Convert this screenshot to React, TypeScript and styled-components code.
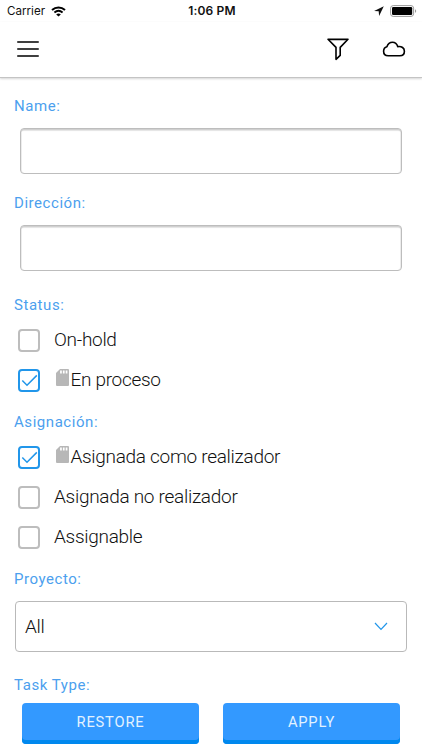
import React, { useState } from "react";
import styled, { createGlobalStyle } from "styled-components";

const GlobalStyle = createGlobalStyle`
  * { box-sizing: border-box; }
  html, body { margin: 0; padding: 0; background: #fff; }
  body { font-family: Roboto, "Liberation Sans", sans-serif; overflow: hidden; }
`;

const Screen = styled.div`
  width: 422px;
  height: 750px;
  display: flex;
  flex-direction: column;
  background: #fff;
  overflow: hidden;
`;

const StatusBar = styled.div`
  height: 22px;
  display: grid;
  grid-template-columns: 1fr auto 1fr;
  align-items: center;
  padding: 0 5px 0 7px;
  font-family: Inter, "Liberation Sans", sans-serif;
  font-size: 11.6px;
  line-height: 22px;
  color: #111;
`;

const Carrier = styled.div`
  display: flex;
  align-items: center;
  gap: 6px;
`;

const Clock = styled.div`
  font-weight: 600;
  font-size: 12px;
  letter-spacing: 0.15px;
`;

const Indicators = styled.div`
  display: flex;
  align-items: center;
  justify-content: flex-end;
  gap: 6px;
`;

const Header = styled.header`
  height: 56px;
  display: flex;
  align-items: center;
  padding: 0 16px 2px 17px;
  border-bottom: 1px solid #c4c4c4;
  box-shadow: 0 1px 2px rgba(0, 0, 0, 0.16);
`;

const IconButton = styled.button<{ $end?: boolean; $gap?: number }>`
  display: flex;
  padding: 0;
  border: 0;
  background: none;
  margin-left: ${(p) => (p.$end ? "auto" : `${p.$gap ?? 0}px`)};
`;

const Form = styled.main`
  display: flex;
  flex-direction: column;
  padding: 0 15px;
`;

const Label = styled.div<{ $top: number }>`
  height: 20px;
  margin: ${(p) => p.$top}px 0 0 -1px;
  line-height: 20px;
  font-size: 15px;
  letter-spacing: 0.55px;
  color: #4c9fee;
`;

const TextInput = styled.input`
  height: 46px;
  margin: 12px 5px 0;
  padding: 0 10px;
  border: 1px solid #bdbdbd;
  border-radius: 4px;
  outline: none;
  background: #fff;
  box-shadow: inset 0 2px 1px -0.5px #cecece, inset 1px 0 0 #eee, inset -1px 0 0 #eee;
  font: 300 19px Roboto, sans-serif;
`;

const Options = styled.div`
  margin-top: 5px;
`;

const Option = styled.label`
  height: 40px;
  display: flex;
  align-items: center;
  padding-left: 3px;
`;

const Box = styled.span<{ $checked: boolean }>`
  width: 22px;
  height: 23px;
  display: flex;
  align-items: center;
  justify-content: center;
  border: 2px solid ${(p) => (p.$checked ? "#2196ea" : "#bdbdbd")};
  border-radius: 4px;
`;

const HiddenCheck = styled.input`
  appearance: none;
  position: absolute;
  margin: 0;
`;

const OptionText = styled.span`
  display: flex;
  align-items: center;
  margin-left: 14px;
  font-size: 19px;
  line-height: 24px;
  font-weight: 300;
  letter-spacing: -0.29px;
  color: #111;
`;

const Card = styled.svg`
  margin: -5px 1.4px 0 2px;
  flex: none;
`;

const Select = styled.div`
  height: 51px;
  margin-top: 12px;
  display: flex;
  align-items: center;
  justify-content: space-between;
  padding: 0 18px 0 9px;
  border: 1px solid #b9b9b9;
  border-radius: 4px;
  font-size: 19px;
  font-weight: 300;
  letter-spacing: -0.28px;
  color: #111;
`;

const Actions = styled.div`
  display: flex;
  gap: 24px;
  margin: 8px 7px 0;
`;

const ActionButton = styled.button`
  width: 177px;
  height: 41px;
  padding: 0 0 3px;
  border: 0;
  border-radius: 4px;
  background: #3399ff;
  box-shadow: inset 0 -4px 0 #0088ee;
  color: #e2f2ff;
  font: 400 14.7px Roboto, sans-serif;
  letter-spacing: 0.8px;
`;

const WifiIcon = () => (
  <svg width="15" height="11" viewBox="0 0 15 11" fill="none">
    <path d="M1 4.1C4.8.6 10.2.6 14 4.1" stroke="#000" strokeWidth="2" />
    <path d="M3.4 6.5c2.5-2.2 5.7-2.2 8.2 0" stroke="#000" strokeWidth="1.8" />
    <path d="M7.5 10.6 5.2 8.4c1.4-1.1 3.2-1.1 4.6 0z" fill="#000" />
  </svg>
);

const LocationIcon = () => (
  <svg width="10" height="10" viewBox="0 0 10 10">
    <path d="M9.8.2.1 4.9l4.6.4.4 4.6z" fill="#111" />
  </svg>
);

const BatteryIcon = () => (
  <svg width="27" height="12" viewBox="0 0 27 12">
    <rect x=".6" y=".6" width="23" height="10.8" rx="2.6" fill="none" stroke="#999" />
    <rect x="2" y="2" width="20.2" height="8" rx="1.2" fill="#000" />
    <path d="M25 4.2c1.6.5 1.6 3.1 0 3.6z" fill="#999" />
  </svg>
);

const MenuIcon = () => (
  <svg width="22" height="18" viewBox="0 0 22 18">
    <path d="M.8 2h20.4M.8 9h20.4M.8 16h20.4" stroke="#000" strokeWidth="1.6" strokeLinecap="round" />
  </svg>
);

const FunnelIcon = () => (
  <svg width="24" height="24" viewBox="0 0 24 24" fill="none">
    <path d="M2 2.2h20l-7.8 8.2v8L10 22.3V10.4z" stroke="#000" strokeWidth="1.6" strokeLinejoin="round" />
    <path d="M3.2 3h17.6" stroke="#000" strokeWidth=".5" />
  </svg>
);

const CloudIcon = () => (
  <svg width="24" height="18" viewBox="0 0 24 18" fill="none">
    <path d="M6.2 15.7C3.4 15.7 1.6 13.8 1.6 11.2c0-2.3 1.2-3.9 3.3-4.5C5.9 3.8 8 2.3 10.5 2.3c2.6 0 4.4 1.6 5.2 4.3 4-.6 6.7 1.4 6.7 4.6 0 2.7-1.8 4.5-4.5 4.5z" stroke="#000" strokeWidth="1.6" strokeLinejoin="round" />
  </svg>
);

const CheckIcon = () => (
  <svg width="17" height="13" viewBox="0 0 17 13">
    <path d="M1.3 6.5 6 11.2l9.8-9.8" fill="none" stroke="#2196ea" strokeWidth="1.5" />
  </svg>
);

const CardIcon = () => (
  <Card width="13" height="17" viewBox="0 0 13 17">
    <path d="M4 0h8a1 1 0 0 1 1 1v15a1 1 0 0 1-1 1H1a1 1 0 0 1-1-1V4z" fill="#b7b7b7" />
    <path d="M4.1 1.4h1.7v3H4.1zm2.8 0h1.7v3H6.9zm2.8 0h1.7v3H9.7z" fill="#fff" />
  </Card>
);

interface CheckOptionProps {
  text: string;
  initial?: boolean;
}

function CheckOption({ text, initial = false }: CheckOptionProps) {
  const [checked, setChecked] = useState(initial);
  return (
    <Option>
      <HiddenCheck type="checkbox" checked={checked} onChange={() => setChecked(!checked)} />
      <Box $checked={checked}>{checked && <CheckIcon />}</Box>
      <OptionText>
        {checked && <CardIcon />}
        {text}
      </OptionText>
    </Option>
  );
}

export default function App() {
  return (
    <>
      <GlobalStyle />
      <Screen>
        <StatusBar>
          <Carrier>Carrier <WifiIcon /></Carrier>
          <Clock>1:06 PM</Clock>
          <Indicators><LocationIcon /><BatteryIcon /></Indicators>
        </StatusBar>
        <Header>
          <IconButton aria-label="Menu"><MenuIcon /></IconButton>
          <IconButton $end aria-label="Filter"><FunnelIcon /></IconButton>
          <IconButton $gap={32} aria-label="Cloud"><CloudIcon /></IconButton>
        </Header>
        <Form>
          <Label $top={18}>Name:</Label>
          <TextInput aria-label="Name" />
          <Label $top={19}>Dirección:</Label>
          <TextInput aria-label="Dirección" />
          <Label $top={24}>Status:</Label>
          <Options>
            <CheckOption text="On-hold" />
            <CheckOption text="En proceso" initial />
          </Options>
          <Label $top={12}>Asignación:</Label>
          <Options>
            <CheckOption text="Asignada como realizador" initial />
            <CheckOption text="Asignada no realizador" />
            <CheckOption text="Assignable" />
          </Options>
          <Label $top={12}>Proyecto:</Label>
          <Select>
            All
            <svg width="14" height="9" viewBox="0 0 14 9">
              <path d="m1 1 6 6.4L13 1" fill="none" stroke="#2196ea" strokeWidth="1.2" />
            </svg>
          </Select>
          <Label $top={23}>Task Type:</Label>
          <Actions>
            <ActionButton>RESTORE</ActionButton>
            <ActionButton>APPLY</ActionButton>
          </Actions>
        </Form>
      </Screen>
    </>
  );
}
